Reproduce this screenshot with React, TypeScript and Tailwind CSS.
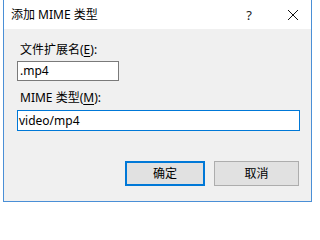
import React from "react";

export default function App() {
  return (
    <div className="w-[315px] h-[207px] bg-white pl-[3px] overflow-hidden font-['Noto_Sans','Noto_Sans_CJK_SC',sans-serif] text-[12px] text-[#000]">
      <div className="w-[309px] h-[202px] border-x border-b border-[#4a8fd6] flex flex-col">
        <div className="h-[29px] bg-white flex items-center shrink-0">
          <span className="pl-[7px] leading-[16px] pt-[1px]">添加 MIME 类型</span>
          <span className="ml-auto mr-[35px] text-[13px] leading-[16px] text-[#222]">?</span>
          <svg width="12" height="12" viewBox="0 0 12 12" className="mr-[12px]">
            <path d="M1 1 L11 11 M11 1 L1 11" stroke="#111" strokeWidth="1" />
          </svg>
        </div>
        <div className="flex-1 bg-[#f0f0f0] pl-[13px] pt-[13px] flex flex-col">
          <div className="leading-[16px] pl-[3px]">
            文件扩展名(<span className="underline underline-offset-2">E</span>):
          </div>
          <div className="mt-[3px] w-[102px] h-[20px] bg-white border border-[#7a7a7a] flex items-center pl-[2px] leading-[16px]">
            .mp4
          </div>
          <div className="mt-[9px] leading-[16px] pl-[3px]">
            MIME 类型(<span className="underline underline-offset-2">M</span>):
          </div>
          <div className="mt-[4px] w-[283px] h-[21px] bg-white border border-[#0078d7] flex items-center pl-[1px] leading-[16px]">
            video/mp4
          </div>
          <div className="mt-[30px] flex gap-[9px] pl-[108px]">
            <div className="w-[80px] h-[25px] bg-[#e1e1e1] border-2 border-[#0078d7] flex items-center justify-center leading-[16px]">
              确定
            </div>
            <div className="w-[85px] h-[25px] bg-[#e1e1e1] border border-[#adadad] flex items-center justify-center leading-[16px]">
              取消
            </div>
          </div>
        </div>
      </div>
    </div>
  );
}
